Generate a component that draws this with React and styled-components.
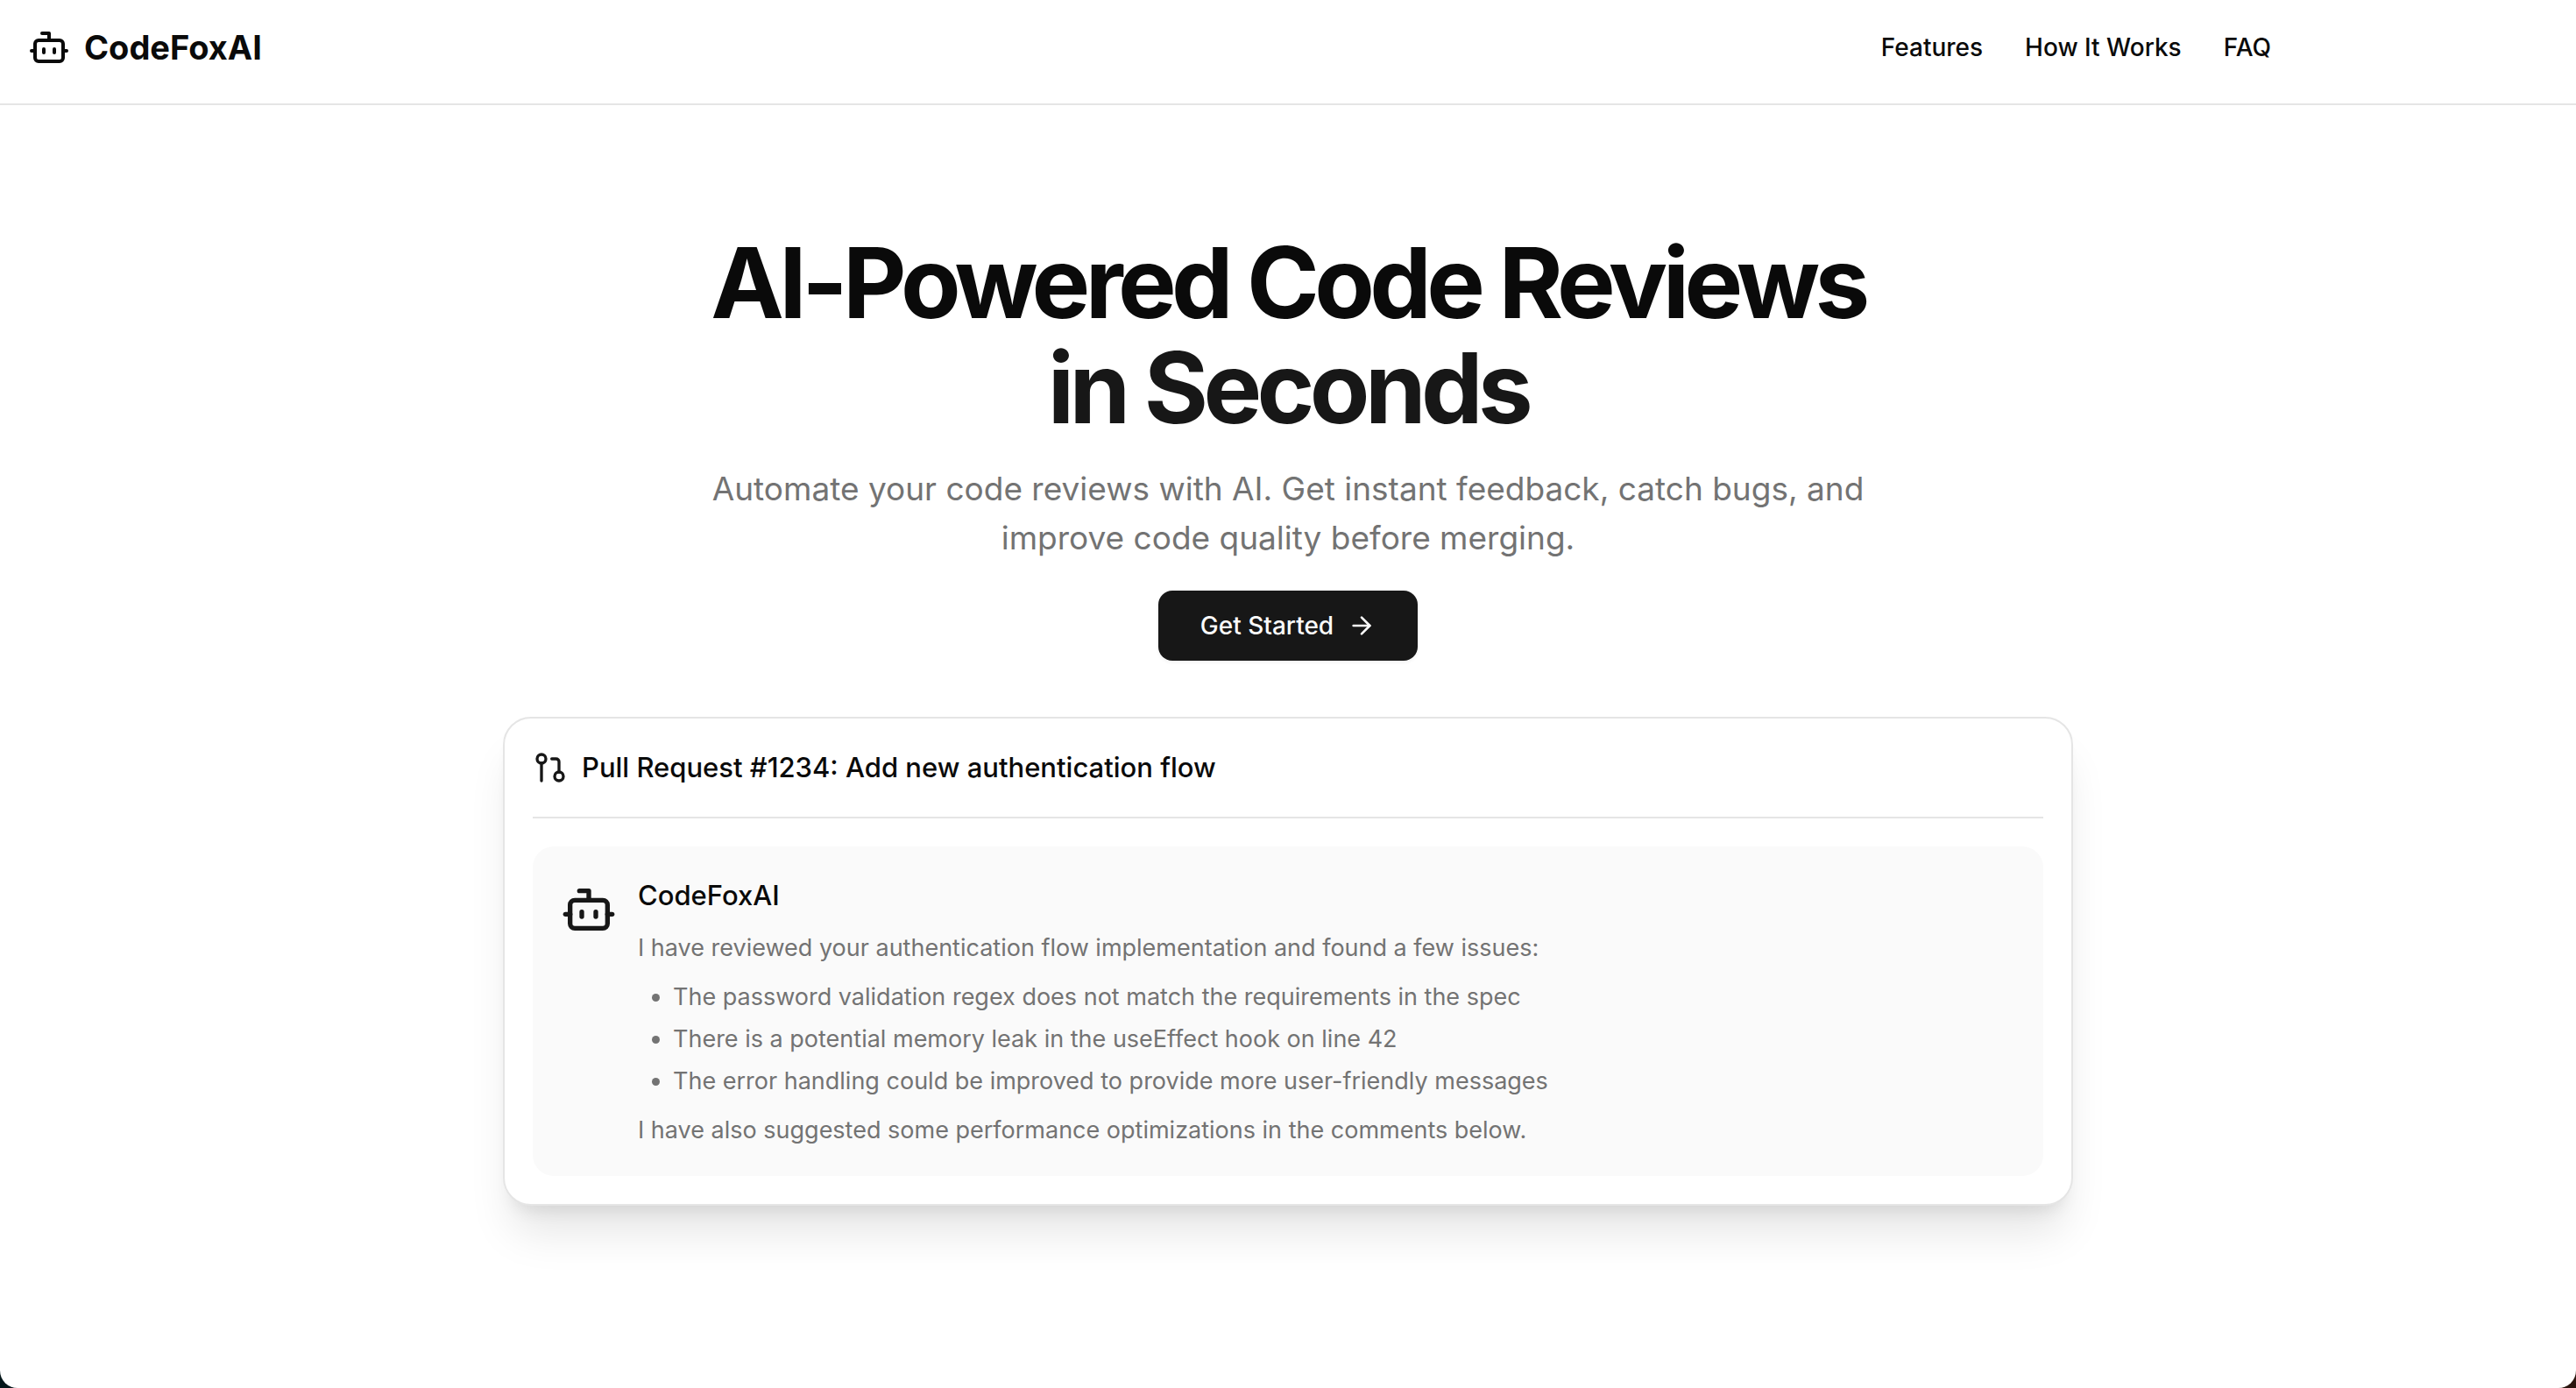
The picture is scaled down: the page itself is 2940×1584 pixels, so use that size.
import React from 'react';
import styled, { createGlobalStyle } from 'styled-components';
import { ArrowRight, Bot, GitPullRequest } from 'lucide-react';

const GlobalStyle = createGlobalStyle`
  *, *::before, *::after { box-sizing: border-box; }
  body {
    margin: 0;
    background: linear-gradient(to right, #04161a 50%, #2a150e 50%);
    color: #0a0a0a;
    font-family: Inter, "Liberation Sans", sans-serif;
    -webkit-font-smoothing: antialiased;
  }
  h1, h2, h3, p, ul { margin: 0; padding: 0; }
`;

const Page = styled.div`
  display: flex;
  flex-direction: column;
  min-height: 100vh;
  background: #ffffff;
  border-radius: 0 0 20px 20px;
`;

const Header = styled.header`
  display: flex;
  align-items: center;
  justify-content: space-between;
  height: 120px;
  padding: 0 348px 10px 32px;
  border-bottom: 2px solid #e5e5e5;
`;

const Brand = styled.a`
  display: flex;
  align-items: center;
  gap: 16px;
  color: inherit;
  font-size: 38px;
  line-height: 56px;
  font-weight: 700;
  text-decoration: none;
`;

const Nav = styled.nav`
  display: flex;
  gap: 48px;
`;

const NavLink = styled.a`
  color: inherit;
  font-size: 28px;
  line-height: 40px;
  font-weight: 500;
  text-decoration: none;
`;

const Hero = styled.main`
  display: flex;
  flex-direction: column;
  align-items: center;
  padding: 142px 32px;
`;

const Intro = styled.section`
  display: flex;
  flex-direction: column;
  align-items: center;
  max-width: 1400px;
  text-align: center;
`;

const Headline = styled.h1`
  font-size: 112px;
  line-height: 120px;
  font-weight: 700;
  letter-spacing: -0.05em;
`;

const HeadlineAccent = styled.span`
  display: block;
  color: #171717;
`;

const Lead = styled.p`
  max-width: 1344px;
  margin: 28px 0 32px;
  color: #737373;
  font-size: 37px;
  line-height: 56px;
`;

const PrimaryButton = styled.button`
  display: inline-flex;
  align-items: center;
  gap: 16px;
  height: 80px;
  padding: 0 48px;
  border: 0;
  border-radius: 16px;
  background: #171717;
  color: #fafafa;
  box-shadow: 0 2px 4px rgba(0, 0, 0, 0.05);
  font-family: inherit;
  font-size: 28px;
  line-height: 40px;
  font-weight: 500;
  cursor: pointer;
`;

const Card = styled.article`
  width: 100%;
  max-width: 1792px;
  margin-top: 64px;
  padding: 32px;
  border: 2px solid #e5e5e5;
  border-radius: 32px;
  background: #ffffff;
  box-shadow: 0 40px 50px -10px rgba(0, 0, 0, 0.1), 0 16px 20px -12px rgba(0, 0, 0, 0.1);
`;

const CardHeader = styled.header`
  display: flex;
  align-items: center;
  gap: 16px;
  padding-bottom: 32px;
  border-bottom: 2px solid #e5e5e5;

  svg { color: #171717; }
`;

const CardTitle = styled.h2`
  font-size: 31px;
  line-height: 48px;
  font-weight: 500;
`;

const Comment = styled.div`
  display: flex;
  align-items: flex-start;
  gap: 24px;
  margin-top: 32px;
  padding: 32px;
  border-radius: 24px;
  background: #fafafa;
`;

const Avatar = styled.div`
  display: flex;
  padding-top: 8px;
  color: #171717;
`;

const CommentBody = styled.div`
  display: flex;
  flex-direction: column;
  gap: 16px;
  color: #737373;
  font-size: 27px;
  line-height: 40px;
`;

const Author = styled.h3`
  color: #0a0a0a;
  font-size: 31px;
  line-height: 48px;
  font-weight: 500;
`;

const IssueList = styled.ul`
  display: flex;
  flex-direction: column;
  gap: 8px;
  && { padding-left: 40px; }
  list-style: disc;
`;

const links = [
  { label: 'Features', href: '#features' },
  { label: 'How It Works', href: '#how-it-works' },
  { label: 'FAQ', href: '#faq' },
];

const issues = [
  'The password validation regex does not match the requirements in the spec',
  'There is a potential memory leak in the useEffect hook on line 42',
  'The error handling could be improved to provide more user-friendly messages',
];

export default function App() {
  return (
    <>
      <GlobalStyle />
      <Page>
        <Header>
          <Brand href="#">
            <Bot size={48} aria-hidden="true" />
            CodeFoxAI
          </Brand>
          <Nav>
            {links.map(({ label, href }) => (
              <NavLink key={href} href={href}>{label}</NavLink>
            ))}
          </Nav>
        </Header>
        <Hero>
          <Intro>
            <Headline>
              AI-Powered Code Reviews
              <HeadlineAccent>in Seconds</HeadlineAccent>
            </Headline>
            <Lead>
              Automate your code reviews with AI. Get instant feedback, catch bugs, and improve code
              quality before merging.
            </Lead>
            <PrimaryButton type="button">
              Get Started
              <ArrowRight size={32} aria-hidden="true" />
            </PrimaryButton>
          </Intro>
          <Card>
            <CardHeader>
              <GitPullRequest size={40} aria-hidden="true" />
              <CardTitle>Pull Request #1234: Add new authentication flow</CardTitle>
            </CardHeader>
            <Comment>
              <Avatar>
                <Bot size={64} aria-hidden="true" />
              </Avatar>
              <CommentBody>
                <Author>CodeFoxAI</Author>
                <p>I have reviewed your authentication flow implementation and found a few issues:</p>
                <IssueList>
                  {issues.map((issue) => (
                    <li key={issue}>{issue}</li>
                  ))}
                </IssueList>
                <p>I have also suggested some performance optimizations in the comments below.</p>
              </CommentBody>
            </Comment>
          </Card>
        </Hero>
      </Page>
    </>
  );
}
